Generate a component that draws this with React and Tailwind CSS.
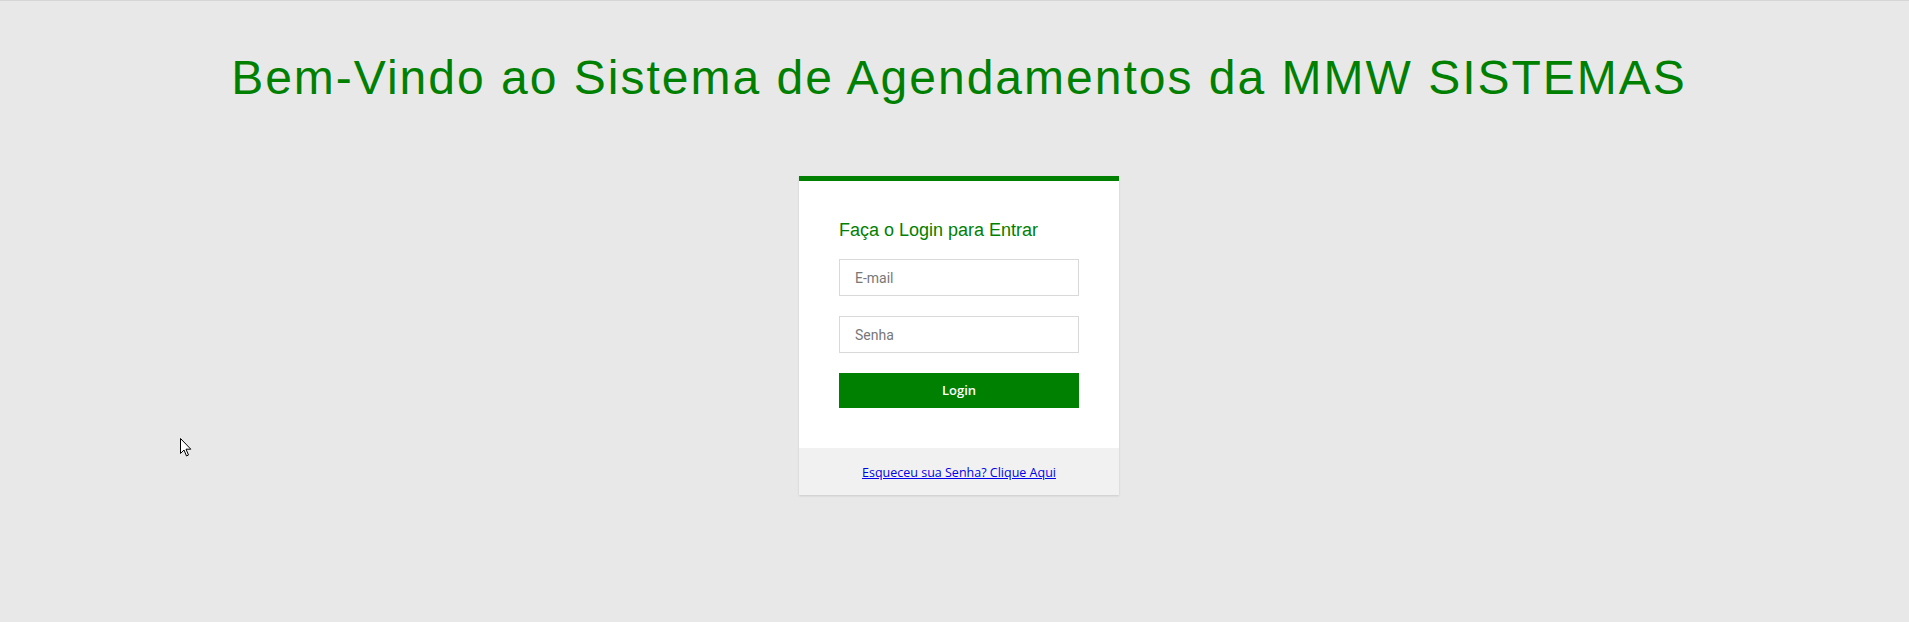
export default function App() {
  return (
    <div className="relative min-h-[622px] bg-[#e8e8e8] border-t border-[#d6d6d6] pl-[9px] font-['Liberation_Sans',Arial,sans-serif]">
      <h1 className="pt-[53px] text-center text-[48px] leading-none tracking-[2px] text-[#008000]">
        Bem-Vindo ao Sistema de Agendamentos da MMW SISTEMAS
      </h1>
      <div className="mx-auto mt-[74px] w-[320px] bg-white border-t-[5px] border-[#008000] shadow-[0_1px_2px_rgba(0,0,0,0.12)]">
        <div className="px-[40px] pt-[40px] pb-[40px]">
          <h2 className="text-[18px] leading-none text-[#008000]">Faça o Login para Entrar</h2>
          <div className="mt-[20px] flex flex-col gap-[20px]">
            <input
              type="text"
              placeholder="E-mail"
              className="h-[37px] w-full border border-[#d9d9d9] px-[15px] text-[14px] font-['Roboto',sans-serif] placeholder:text-[#777] outline-none"
            />
            <input
              type="password"
              placeholder="Senha"
              className="h-[37px] w-full border border-[#d9d9d9] px-[15px] text-[14px] font-['Roboto',sans-serif] placeholder:text-[#777] outline-none"
            />
            <button className="h-[35px] w-full bg-[#008000] text-white font-semibold text-[13px] font-['Open_Sans',sans-serif]">
              Login
            </button>
          </div>
        </div>
        <div className="h-[47px] pt-[3px] bg-[#f1f1f1] flex items-center justify-center">
          <a href="#" className="text-[12.5px] text-[#0000ee] underline font-['Open_Sans',sans-serif]">
            Esqueceu sua Senha? Clique Aqui
          </a>
        </div>
      </div>
      <svg className="absolute left-[180px] top-[437px]" width="12" height="19" viewBox="0 0 12 19">
        <path d="M0.5 0.5 L0.5 15.5 L4 12 L6.5 18 L8.5 17 L6 11.2 L10.8 11.2 Z" fill="#fff" stroke="#000" strokeWidth="1" strokeLinejoin="miter" />
      </svg>
    </div>
  );
}
